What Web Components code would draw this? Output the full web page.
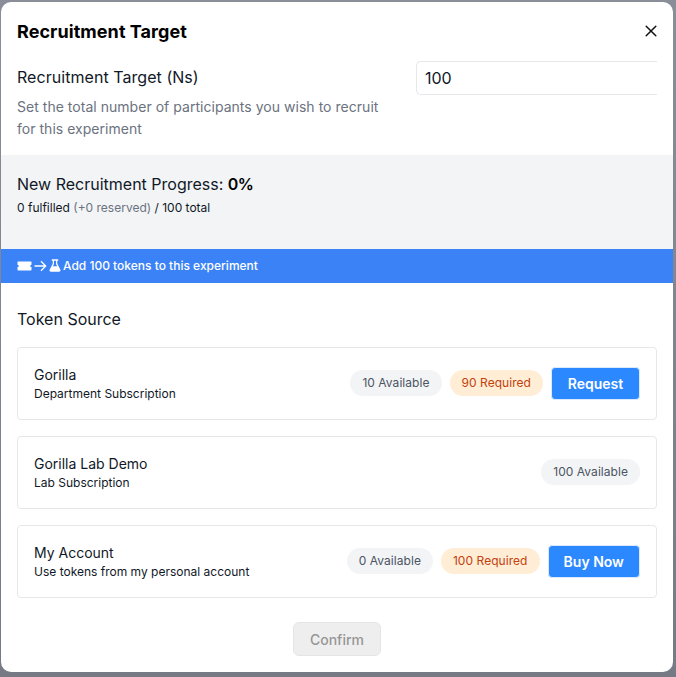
<!DOCTYPE html>
<html lang="en"><head><meta charset="utf-8"><title>Recruitment Target</title>
<style>
html,body{margin:0;height:677px;overflow:hidden}
body{background:linear-gradient(#8a8e98,#757a85);font-family:Inter,"Liberation Sans",sans-serif;color:#111827;padding:2px 3px 5px 1px;box-sizing:border-box}
</style></head><body>
<rt-modal>
  <rt-target></rt-target>
  <rt-progress></rt-progress>
  <rt-banner>Add 100 tokens to this experiment</rt-banner>
  <rt-sources>
    <rt-source name="Gorilla" sub="Department Subscription" available="10 Available" required="90 Required" action="Request" action-width="89"></rt-source>
    <rt-source name="Gorilla Lab Demo" sub="Lab Subscription" available="100 Available"></rt-source>
    <rt-source name="My Account" sub="Use tokens from my personal account" available="0 Available" required="100 Required" action="Buy Now" action-width="92.5"></rt-source>
  </rt-sources>
</rt-modal>
<script>
function def(name,css,html){
  customElements.define(name,class extends HTMLElement{
    connectedCallback(){
      if(this.shadowRoot)return;
      const r=this.attachShadow({mode:'open'});
      r.innerHTML='<style>'+css+'</style>'+(typeof html==='function'?html(this):html);
    }
  });
}
def('rt-modal',`
:host{display:flex;flex-direction:column;height:670px;background:#fff;border-radius:10px;overflow:hidden;box-sizing:border-box}
header{display:flex;justify-content:space-between;align-items:center;height:58px;padding:0 16px;box-sizing:border-box}
h2{margin:2px 0 0;font-size:18px;font-weight:700;color:#000;line-height:56px;letter-spacing:.06px}
svg{display:block}
footer{display:flex;justify-content:center;margin-top:24px}
button{width:88px;height:34px;border:1px solid #e5e5e5;border-radius:6px;background:#eeeeee;color:#969696;font:500 14px Inter,sans-serif;padding:0}
`,`<header><h2>Recruitment Target</h2>
<svg width="12" height="12" viewBox="0 0 12 12" fill="none" stroke="#111" stroke-width="1.5" stroke-linecap="round"><path d="M1.200 1.200 10.800 10.800M10.800 1.200 1.200 10.800"/></svg></header>
<slot></slot><footer><button disabled>Confirm</button></footer>`);
def('rt-target',`
:host{display:flex;justify-content:space-between;height:95px;padding:0 16px;box-sizing:border-box}
.l{width:370px}
.t{font-size:16px;line-height:34px;color:#111827;letter-spacing:.05px}
p{margin:2px 0 0;font-size:14px;line-height:22px;color:#6b7280;letter-spacing:.03px}
.i{width:241px;height:34px;margin-top:1px;box-sizing:border-box;border:1px solid #e5e7eb;border-right:0;border-radius:5px 0 0 5px;font-size:16px;line-height:32px;padding-left:8px;color:#111827}
`,`<div class="l"><div class="t">Recruitment Target (Ns)</div><p>Set the total number of participants you wish to recruit for this experiment</p></div><div class="i">100</div>`);
def('rt-progress',`
:host{display:block;height:94px;box-sizing:border-box;background:#f3f4f6;padding:17px 16px 0}
.a{font-size:16px;line-height:24px;color:#111827}
b{font-weight:600;color:#000;letter-spacing:-.6px}
.b{font-size:12px;line-height:16px;margin-top:4px;color:#111827}
span{color:#6b7280}
`,`<div class="a">New Recruitment Progress: <b>0%</b></div><div class="b">0 fulfilled <span>(+0 reserved)</span> / 100 total</div>`);
def('rt-banner',`
:host{display:flex;align-items:center;height:34px;background:#3b82f6;color:#fff;font-size:12px;font-weight:500;padding:0 0 1px 16px;box-sizing:border-box}
svg{display:block;flex:none}
`,`<svg width="15" height="10" viewBox="0 0 15 10" fill="#fff"><path d="M1.200 .5h12.600a.7.7 0 0 1 .7.7v2.600a1.200 1.200 0 0 0 0 2.400v2.600a.7.7 0 0 1-.7.7H1.200a.7.7 0 0 1-.7-.7V6.200a1.200 1.200 0 0 0 0-2.400V1.200a.7.7 0 0 1 .7-.7z" transform="translate(0 -.1)"/></svg>
<svg width="13" height="12" viewBox="0 0 13 12" fill="none" stroke="#fff" stroke-width="1.300" style="margin-left:2px"><path d="M.5 6h11M7 1.300 11.700 6 7 10.700"/></svg>
<svg width="12" height="13" viewBox="0 0 12 13" fill="#fff" style="margin:0 2px 0 2px"><path fill-rule="evenodd" d="M2.800 .3h6.400v1.400H8.300v3.100l3 5.600c.6 1.100-.1 2.300-1.300 2.300H2c-1.200 0-1.900-1.200-1.300-2.300l3-5.600V1.700h-.9zM5 1.700v3.400L3.900 7.200h4.200L7 5.100V1.700z"/></svg>
<slot></slot>`);
def('rt-sources',`
:host{display:flex;flex-direction:column;gap:16px;padding:0 16px;margin-top:24px}
h3{margin:0;font-size:16px;font-weight:400;line-height:24px;color:#111827}
`,`<h3>Token Source</h3><slot></slot>`);
def('rt-source',`
:host{display:flex;align-items:center;justify-content:space-between;height:73px;box-sizing:border-box;border:1px solid #e5e7eb;border-radius:4px;padding:0 16px;background:#fff}
.t{padding-top:2px}
.n{font-size:14px;line-height:18px;color:#111827}
.s{font-size:12px;line-height:18px;color:#111827;margin-top:1px}
.r{display:flex;align-items:center;gap:8px;margin-bottom:1px}
.p{font-size:12px;line-height:26px;padding:0 12px;border-radius:13px;background:#f3f4f6;color:#4b5563;letter-spacing:.05px}
.q{background:#ffedd5;color:#c2410c}
button{height:33px;padding:0;border:1px solid #dbeafe;border-radius:4px;background:#2b88ff;color:#fff;font:600 14px Inter,sans-serif}
`,h=>{const g=a=>h.getAttribute(a);return `<div class="t"><div class="n">${g('name')}</div><div class="s">${g('sub')}</div></div><div class="r"><span class="p">${g('available')}</span>${g('required')?`<span class="p q">${g('required')}</span>`:''}${g('action')?`<button style="width:${g('action-width')}px">${g('action')}</button>`:''}</div>`});
</script>
</body></html>
